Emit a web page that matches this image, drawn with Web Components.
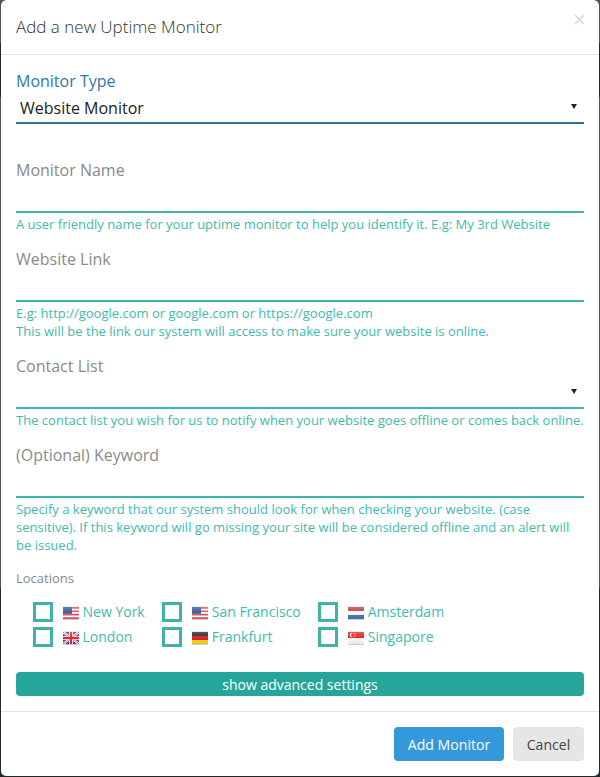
<!DOCTYPE html>
<html lang="en"><head><meta charset="utf-8"><title>Add a new Uptime Monitor</title>
<style>
html,body{margin:0;padding:0;height:777px;overflow:hidden}
html{background:#25282b}
body{font-family:"Open Sans",sans-serif;background:linear-gradient(#555 0 43px,#25282b 43px 97px,#555 97px 588px,#25282b 588px)}
</style></head><body>
<uptime-dialog>
  <span slot="title">Add a new Uptime Monitor</span>
  <form-field label="Monitor Type" value="Website Monitor" select focus></form-field>
  <form-field label="Monitor Name">A user friendly name for your uptime monitor to help you identify it. E.g: My 3rd Website</form-field>
  <form-field label="Website Link">E.g: http://google.com or google.com or https://google.com<br>This will be the link our system will access to make sure your website is online.</form-field>
  <form-field label="Contact List" select>The contact list you wish for us to notify when your website goes offline or comes back online.</form-field>
  <form-field label="(Optional) Keyword">Specify a keyword that our system should look for when checking your website. (case sensitive). If this keyword will go missing your site will be considered offline and an alert will be issued.</form-field>
  <location-picker>
    <location-item flag="us">New York</location-item>
    <location-item flag="us">San Francisco</location-item>
    <location-item flag="nl">Amsterdam</location-item>
    <location-item flag="gb">London</location-item>
    <location-item flag="de">Frankfurt</location-item>
    <location-item flag="sg">Singapore</location-item>
  </location-picker>
  <span slot="advanced">show advanced settings</span>
  <span slot="primary">Add Monitor</span>
  <span slot="secondary">Cancel</span>
</uptime-dialog>
<script>
class UptimeDialog extends HTMLElement{
  constructor(){super();this.attachShadow({mode:'open'}).innerHTML=`<style>
  :host{display:block;width:598px;height:776px;background:#fff;background-clip:padding-box;border:solid transparent;border-width:0 1px 1px;border-radius:6px;font-family:"Open Sans",sans-serif}
  header{height:55px;box-sizing:border-box;border-bottom:1px solid #e5e5e5;padding:0 15px 2px;display:flex;align-items:center;justify-content:space-between;font-size:17px;font-weight:300;color:#333}
  .x{width:11px;height:11px;margin:-13px -1px 0 0;display:block}
  main{padding:15px 15px 0}
  .adv{display:flex;align-items:center;justify-content:center;height:24px;background:#26a69a;color:#fff;border-radius:4px;font-size:14px;margin-top:25px}
  footer{margin-top:15px;border-top:1px solid #e5e5e5;padding:15px;display:flex;justify-content:flex-end;gap:9px}
  .b{height:34px;display:flex;align-items:center;justify-content:center;border-radius:4px;font-size:14.100px;box-sizing:border-box}
  .p{background:#3498db;color:#fff;width:110px}
  .s{background:#e6e6e6;color:#444;width:71px}
  </style>
  <header><slot name="title"></slot><svg class="x" viewBox="0 0 11 11"><path d="M1 1l9 9M10 1l-9 9" stroke="#d2d2d2" stroke-width="1.200" fill="none"/></svg></header>
  <main><slot></slot><div class="adv"><slot name="advanced"></slot></div></main>
  <footer><div class="b p"><slot name="primary"></slot></div><div class="b s"><slot name="secondary"></slot></div></footer>`}
}
class FormField extends HTMLElement{
  constructor(){super();this.attachShadow({mode:'open'})}
  connectedCallback(){
    const sel=this.hasAttribute('select'),foc=this.hasAttribute('focus');
    this.shadowRoot.innerHTML=`<style>
    :host{display:block;margin-bottom:15px;font-family:"Open Sans",sans-serif}
    :host([focus]){margin-bottom:35px}
    .l{font-size:16px;line-height:22px;color:${foc?'#2f78a8':'#8a8a8a'}}
    .i{height:32px;box-sizing:border-box;border-bottom:2px solid ${foc?'#2d7390':'#3db5aa'};display:flex;align-items:center;justify-content:space-between;padding:2px 7px 0 4px;font-size:16px;color:#222}
    .h{font-size:13.020px;line-height:18px;color:#3fbab0;margin-top:2px}
    svg{width:6px;height:5px;display:block;margin-bottom:3px}
    </style>
    <div class="l">${this.getAttribute('label')}</div>
    <div class="i"><span>${this.getAttribute('value')||''}</span>${sel?'<svg viewBox="0 0 6 5"><path d="M0 0h6L3 5z" fill="#222"/></svg>':''}</div>
    <div class="h"><slot></slot></div>`;
    if(foc)this.shadowRoot.querySelector('.h').style.display='none';
  }
}
class LocationPicker extends HTMLElement{
  constructor(){super();this.attachShadow({mode:'open'}).innerHTML=`<style>
  :host{display:block;font-family:"Open Sans",sans-serif}
  .t{font-size:13px;line-height:18px;color:#85898f;margin-bottom:15px}
  .g{display:grid;grid-template-columns:auto auto auto;justify-content:start;column-gap:17.500px;row-gap:5px;padding-left:17px}
  </style><div class="t">Locations</div><div class="g"><slot></slot></div>`}
}
const FLAGS={
 us:`<rect width="16" height="14" fill="#fff"/><path d="M0 1h16v1.700H0zM0 4.400h16v1.700H0zM0 7.800h16v1.700H0zM0 11.200h16V13H0z" fill="#d9535f"/><rect y="1" width="9" height="6.800" fill="#3f5c9a"/>`,
 nl:`<rect y="1" width="16" height="4" fill="#c2434d"/><rect y="5" width="16" height="4" fill="#f4f4f4"/><rect y="9" width="16" height="4" fill="#4a70b0"/>`,
 gb:`<rect y="1" width="16" height="12" fill="#31458f"/><path d="M0 1l16 12M16 1L0 13" stroke="#fff" stroke-width="2.400"/><path d="M0 1l16 12M16 1L0 13" stroke="#d8394a" stroke-width=".8"/><path d="M8 1v12M0 7h16" stroke="#fff" stroke-width="4"/><path d="M8 1v12M0 7h16" stroke="#d8293c" stroke-width="2.400"/>`,
 de:`<rect y="1" width="16" height="4" fill="#2b2b2b"/><rect y="5" width="16" height="4" fill="#d8232a"/><rect y="9" width="16" height="4" fill="#f7d117"/>`,
 sg:`<rect y="1" width="16" height="6" fill="#e2252b"/><rect y="7" width="16" height="6" fill="#f3f3f3"/><circle cx="4" cy="4" r="2.200" fill="#fff"/><circle cx="5" cy="4" r="2" fill="#e2252b"/><path d="M6 2.500h2M5.500 5h2.500" stroke="#fff" stroke-width=".7" stroke-dasharray="1 .6"/>`
};
class LocationItem extends HTMLElement{
  constructor(){super();this.attachShadow({mode:'open'})}
  connectedCallback(){this.shadowRoot.innerHTML=`<style>
  :host{display:flex;align-items:center;height:20px;font-family:"Open Sans",sans-serif;font-size:14px;line-height:18px;color:#3fbab0;white-space:nowrap}
  .c{width:20px;height:20px;box-sizing:border-box;border:3px solid #3fb3a8;margin-right:10px;flex:none}
  svg{width:16px;height:14px;margin:2px 3.500px 0 0;flex:none;display:block}
  .t{display:block}
  </style><span class="c"></span><svg viewBox="0 0 16 14"><defs><linearGradient id="g" x1="0" y1="0" x2="0" y2="1"><stop offset="0" stop-color="#fff" stop-opacity=".25"/><stop offset=".5" stop-color="#fff" stop-opacity="0"/><stop offset="1" stop-color="#000" stop-opacity=".08"/></linearGradient></defs>${FLAGS[this.getAttribute('flag')]}<rect width="16" height="1" fill="#e4e4e4"/><rect y="13" width="16" height="1" fill="#dcdcdc"/><rect width="16" height="14" fill="url(#g)"/></svg><span class="t"><slot></slot></span>`}
}
customElements.define('uptime-dialog',UptimeDialog);
customElements.define('form-field',FormField);
customElements.define('location-picker',LocationPicker);
customElements.define('location-item',LocationItem);
</script></body></html>
